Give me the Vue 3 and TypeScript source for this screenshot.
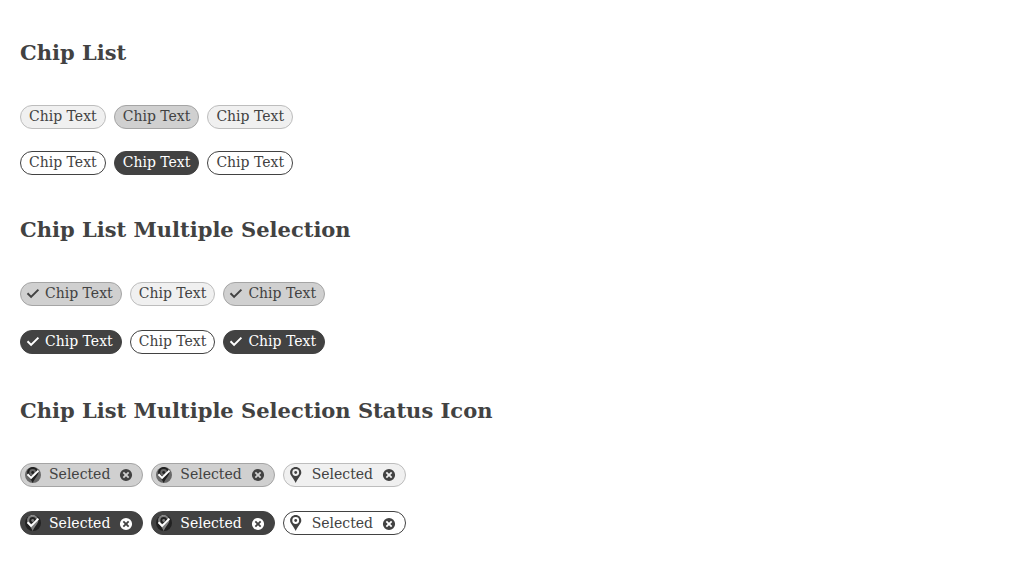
<script setup lang="ts">
type Kind = 'plain' | 'check' | 'status'

interface Chip {
  text: string
  selected: boolean
}

interface Row {
  look: 'solid' | 'outline'
  chips: Chip[]
}

interface Section {
  title: string
  kind: Kind
  rows: Row[]
}

const row = (look: Row['look'], text: string, selection: boolean[]): Row => ({
  look,
  chips: selection.map((selected) => ({ text, selected })),
})

const section = (title: string, kind: Kind, text: string, selection: boolean[]): Section => ({
  title,
  kind,
  rows: [row('solid', text, selection), row('outline', text, selection)],
})

const sections: Section[] = [
  section('Chip List', 'plain', 'Chip Text', [false, true, false]),
  section('Chip List Multiple Selection', 'check', 'Chip Text', [true, false, true]),
  section('Chip List Multiple Selection Status Icon', 'status', 'Selected', [true, true, false]),
]
</script>

<template>
  <main class="page">
    <section v-for="s in sections" :key="s.title" class="section" :class="s.kind">
      <h2 class="title">{{ s.title }}</h2>
      <div v-for="r in s.rows" :key="r.look" class="chip-list" :class="r.look">
        <div v-for="(c, i) in r.chips" :key="i" class="chip" :class="{ selected: c.selected }">
          <svg v-if="s.kind === 'check' && c.selected" class="icon tick" viewBox="0 0 16 16">
            <path d="M2.500 7.300 6.100 10.900 13.400 3.600" />
          </svg>
          <span v-if="s.kind === 'status'" class="avatar">
            <svg class="icon" viewBox="0 0 16 16">
              <path
                fill-rule="evenodd"
                d="M7.700 0C4.600 0 2.100 2.400 2.100 5.500 2.100 8.600 5.600 11 7.700 16 9.800 11 13.300 8.600 13.300 5.500 13.300 2.400 10.800 0 7.700 0ZM7.700 2.100a3.400 3.400 0 1 1 0 6.800 3.400 3.400 0 0 1 0-6.800Z"
              />
              <circle cx="7.700" cy="5.500" r="1.400" />
            </svg>
            <span v-if="c.selected" class="mask">
              <svg class="icon tick" viewBox="0 0 16 16">
                <path d="M2.500 7.300 6.100 10.900 13.400 3.600" />
              </svg>
            </span>
          </span>
          <span class="label">{{ c.text }}</span>
          <svg v-if="s.kind === 'status'" class="icon remove" viewBox="0 0 16 16">
            <path
              fill-rule="evenodd"
              d="M8 1.900a6.100 6.100 0 1 0 0 12.200A6.100 6.100 0 0 0 8 1.900ZM6 4.700 8 6.700 10 4.700 11.300 6 9.300 8 11.300 10 10 11.300 8 9.300 6 11.300 4.700 10 6.700 8 4.700 6Z"
            />
          </svg>
        </div>
      </div>
    </section>
  </main>
</template>

<style>
body {
  background: #fff;
}
</style>

<style scoped>
.page {
  padding: 40px 20px 0;
  color: #424242;
  font-family: 'DejaVu Serif', serif;
  font-size: 14px;
}

.title {
  margin: 0 0 40px;
  font-size: 21px;
  line-height: 25px;
  font-weight: 700;
}

.chip-list {
  display: flex;
  gap: 8px;
  height: 24px;
}

.chip-list + .chip-list {
  margin-top: 24px;
}

.plain .chip-list + .chip-list {
  margin-top: 22px;
}

.section + .section {
  margin-top: 42px;
}

.status.section {
  margin-top: 44px;
}

.chip {
  box-sizing: border-box;
  display: flex;
  align-items: center;
  height: 24px;
  padding: 0 4px;
  border: 1px solid;
  border-radius: 12px;
  line-height: 20px;
  white-space: nowrap;
}

.label {
  padding: 0 4px;
  margin-bottom: 2px;
}

.solid .chip {
  border-color: #bdbdbd;
  background: #f0f0f0;
}

.solid .chip.selected {
  border-color: #a5a5a5;
  background: #d0d0d0;
}

.outline .chip {
  border-color: #424242;
}

.outline .chip.selected {
  color: #fff;
  background: #424242;
}

.icon {
  display: block;
  flex: none;
  width: 16px;
  height: 16px;
  fill: currentColor;
}

.tick {
  fill: none;
  stroke: currentColor;
  stroke-width: 2;
}

.avatar {
  position: relative;
  width: 16px;
  height: 16px;
}

.status .label {
  margin-left: 4px;
}

.status .outline .label {
  margin-bottom: 0;
}

.remove {
  margin-left: 4px;
  margin-right: 4px;
}

.outline .remove {
  margin-top: 1px;
}

.mask {
  position: absolute;
  inset: 0;
  overflow: hidden;
  border-radius: 50%;
  color: #fff;
  background: rgba(0, 0, 0, 0.5);
}
</style>
